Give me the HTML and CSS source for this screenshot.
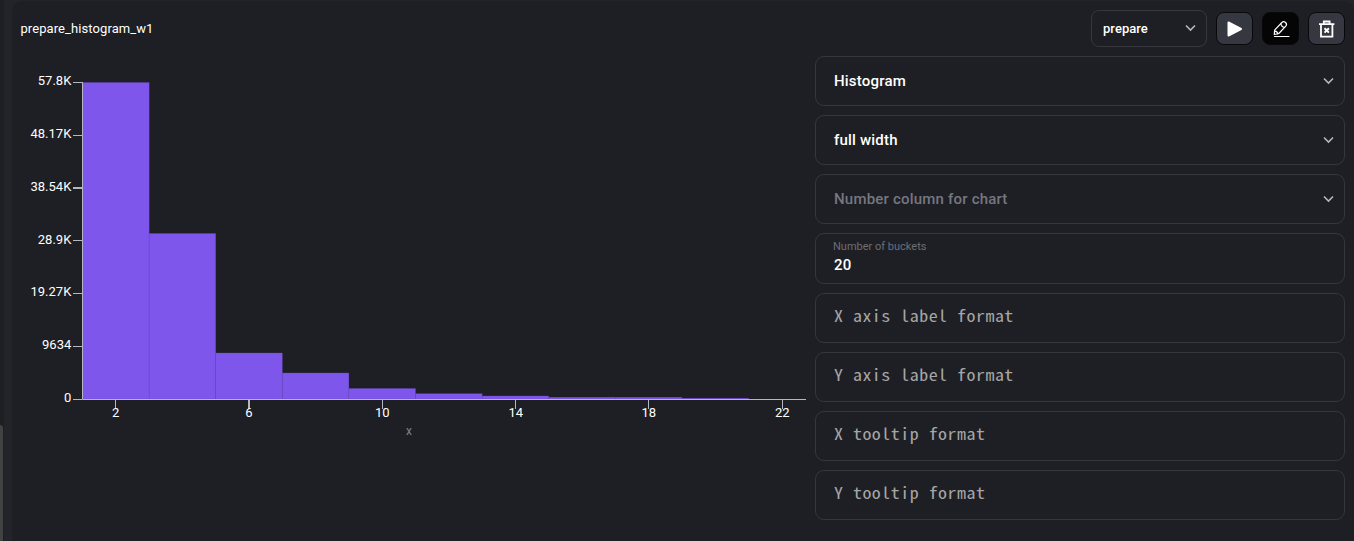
FILE: index.html
```html
<!DOCTYPE html>
<html lang="en">
<head>
<meta charset="utf-8">
<title>prepare_histogram_w1</title>
<link rel="stylesheet" href="styles.css">
</head>
<body>
<div class="app">
  <div class="gutter"><div class="scroll-thumb"></div></div>
  <main class="panel">
    <header class="header">
      <h1 class="title">prepare_histogram_w1</h1>
      <div class="actions">
        <div class="select-small"><span>prepare</span>
          <svg class="chevron" viewBox="0 0 12 8"><path d="M2 1.500 6.500 6l4.500-4.500"/></svg>
        </div>
        <button class="btn" aria-label="Run"><svg width="20" height="20" viewBox="0 0 20 20"><path d="M3.500 3.500v13L16 10z" fill="#fff" stroke="#fff" stroke-width="2" stroke-linejoin="round"/></svg></button>
        <button class="btn btn-active" aria-label="Edit"><svg width="20" height="20" viewBox="0 0 20 20" fill="none" stroke="#fff" stroke-width="1.200" stroke-linejoin="round" stroke-linecap="round"><path d="M3.300 15.500 3.600 11.200 10.900 3.500Q12.600 1.800 14.500 3.500T14.800 7.100L7.800 14.500Z"/><path d="M9.700 4.800q.7 2.800 3.800 3.700M4 12.200q2.500.3 2.800 2.600"/><path d="M3.500 17.500H18"/></svg></button>
        <button class="btn" aria-label="Delete"><svg width="20" height="20" viewBox="0 0 20 20" fill="none" stroke="#fff" stroke-width="1.800"><path d="M2 5.200h15.400M6.800 5V2.500h5.800V5M4 5.200v12.400h11.400V5.200"/><path d="m7.500 9.200 4.400 4.400m0-4.400-4.400 4.400" stroke-width="2"/></svg></button>
      </div>
    </header>
    <div class="content">
      <svg class="chart" width="803" height="400" viewBox="12 56 803 400">
        <g class="bars">
          <rect x="82.500" y="82.500" width="66.600" height="316.500"/>
          <rect x="149.100" y="233.500" width="66.600" height="165.500"/>
          <rect x="215.700" y="353" width="66.600" height="46"/>
          <rect x="282.300" y="373" width="66.600" height="26"/>
          <rect x="348.900" y="388.500" width="66.600" height="10.500"/>
          <rect x="415.500" y="393.700" width="66.600" height="5.300"/>
          <rect x="482.100" y="396" width="66.600" height="3"/>
          <rect x="548.700" y="397.200" width="66.600" height="1.800"/>
          <rect x="615.300" y="397.200" width="66.600" height="1.800"/>
          <rect x="681.900" y="398.200" width="66.600" height=".8"/>
        </g>
        <g class="axis">
          <path d="M82.500 82v317.500H806M73 82.500h9M73 135.500h9M73 240.500h9M73 293.500h9M73 346.500h9M73 399.500h9M115.500 400v9M382.500 400v9M515.500 400v9M648.500 400v9M782.500 400v9"/>
          <path class="thick" d="M73 188h9M249 400v9"/>
        </g>
        <g class="labels labels-y">
          <text x="71.300" y="85">57.8K</text><text x="71.300" y="138">48.17K</text><text x="71.300" y="191">38.54K</text><text x="71.300" y="244">28.9K</text><text x="71.300" y="296">19.27K</text><text x="71.300" y="349">9634</text><text x="71.300" y="402">0</text>
        </g>
        <g class="labels labels-x">
          <text x="115.700" y="417">2</text><text x="249" y="417">6</text><text x="382.300" y="417">10</text><text x="515.700" y="417">14</text><text x="648.800" y="417">18</text><text x="782.300" y="417">22</text>
          <text class="axis-name" x="409" y="435">x</text>
        </g>
      </svg>
      <form class="settings">
        <div class="field"><span>Histogram</span><svg class="chevron" viewBox="0 0 12 8"><path d="M2 1.500 6.500 6l4.500-4.500"/></svg></div>
        <div class="field"><span>full width</span><svg class="chevron" viewBox="0 0 12 8"><path d="M2 1.500 6.500 6l4.500-4.500"/></svg></div>
        <div class="field muted"><span>Number column for chart</span><svg class="chevron" viewBox="0 0 12 8"><path d="M2 1.500 6.500 6l4.500-4.500"/></svg></div>
        <div class="field stacked"><label>Number of buckets</label><span>20</span></div>
        <div class="field mono"><span>X axis label format</span></div>
        <div class="field mono"><span>Y axis label format</span></div>
        <div class="field mono"><span>X tooltip format</span></div>
        <div class="field mono"><span>Y tooltip format</span></div>
      </form>
    </div>
  </main>
</div>
</body>
</html>
```
FILE: styles.css
```css
* { box-sizing: border-box; }
body { margin: 0; background: #232429; color: #fff; font-family: Roboto, sans-serif; overflow: hidden; }
.app { display: flex; height: 541px; }
.gutter { width: 4px; margin-right: 8px; background: #1e1f23; display: flex; align-items: flex-end; }
.scroll-thumb { width: 3px; height: 116px; background: #424242; border-radius: 0 3px 0 0; }
.panel { flex: 1; margin-top: 1px; background: #1e1f24; border-radius: 10px 10px 0 0; }
.header { height: 55px; padding: 0 9px 0 8.400px; display: flex; align-items: center; justify-content: space-between; }
.title { margin: 0; font-size: 13px; font-weight: 400; letter-spacing: .09px; }
.actions { display: flex; align-items: center; gap: 9px; }
.select-small { width: 116px; height: 37px; border: 1px solid #36373c; border-radius: 8px; padding: 0 10px 1px 11px; display: flex; align-items: center; justify-content: space-between; font-size: 13px; font-weight: 500; letter-spacing: .05px; }
.chevron { width: 12px; height: 8px; fill: none; stroke: #b5b8be; stroke-width: 1.600; }
.btn { width: 37px; height: 33px; padding: 0; border: 1px solid #09090b; border-radius: 8px; background: #363841; display: flex; align-items: center; justify-content: center; }
.btn-active { background: #050505; }
.content { display: flex; }
.chart { display: block; flex: none; }
.settings { width: 530px; display: flex; flex-direction: column; gap: 9px; }
.field { height: 50.150px; padding: 0 10px 0 18px; border: 1px solid #36373c; border-radius: 9px; display: flex; align-items: center; justify-content: space-between; font-size: 15px; font-weight: 500; letter-spacing: .2px; }
.muted { color: #757780; }
.stacked { flex-direction: column; align-items: flex-start; justify-content: flex-start; padding-top: 6px; }
.stacked label { font-size: 11px; line-height: 13px; font-weight: 400; letter-spacing: 0; color: #6c6e77; margin-left: -1px; }
.stacked span { line-height: 18px; margin-top: 3px; }
.mono { font: 400 16px "Noto Sans Mono CJK SC", "DejaVu Sans Mono", monospace; letter-spacing: .450px; color: #a6a6a6; padding-bottom: 5.500px; }
.mono span { transform: scaleX(1.120); transform-origin: left center; }
.bars rect { fill: #7f56eb; stroke: #6747b8; stroke-width: .3; }
.axis path { fill: none; stroke: #b5b8c2; stroke-width: 1; }
.axis .thick { stroke-width: 2; }
.labels { fill: #fff; font-size: 13px; }
.labels-y { text-anchor: end; }
.labels-x { text-anchor: middle; }
.labels .axis-name { fill: #80828a; font-size: 12px; }
```
